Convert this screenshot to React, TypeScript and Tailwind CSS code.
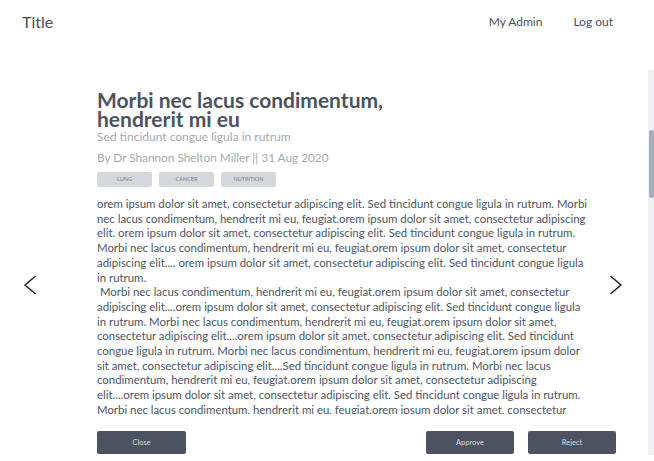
import React from "react";

const P1 =
  "orem ipsum dolor sit amet, consectetur adipiscing elit. Sed tincidunt congue ligula in rutrum. Morbi nec lacus condimentum, hendrerit mi eu, feugiat.orem ipsum dolor sit amet, consectetur adipiscing elit. orem ipsum dolor sit amet, consectetur adipiscing elit. Sed tincidunt congue ligula in rutrum. Morbi nec lacus condimentum, hendrerit mi eu, feugiat.orem ipsum dolor sit amet, consectetur adipiscing elit.... orem ipsum dolor sit amet, consectetur adipiscing elit. Sed tincidunt congue ligula in rutrum.";
const P2 =
  "\u00a0Morbi nec lacus condimentum, hendrerit mi eu, feugiat.orem ipsum dolor sit amet, consectetur adipiscing elit....orem ipsum dolor sit amet, consectetur adipiscing elit. Sed tincidunt congue ligula in rutrum. Morbi nec lacus condimentum, hendrerit mi eu, feugiat.orem ipsum dolor sit amet, consectetur adipiscing elit....orem ipsum dolor sit amet, consectetur adipiscing elit. Sed tincidunt congue ligula in rutrum. Morbi nec lacus condimentum, hendrerit mi eu, feugiat.orem ipsum dolor sit amet, consectetur adipiscing elit....Sed tincidunt congue ligula in rutrum. Morbi nec lacus condimentum, hendrerit mi eu, feugiat.orem ipsum dolor sit amet, consectetur adipiscing elit....orem ipsum dolor sit amet, consectetur adipiscing elit. Sed tincidunt congue ligula in rutrum. Morbi nec lacus condimentum, hendrerit mi eu, feugiat.orem ipsum dolor sit amet, consectetur adipiscing elit. Sed tincidunt congue ligula in rutrum.";

function Chevron({ dir }: { dir: "left" | "right" }) {
  return (
    <svg width="14" height="20" viewBox="0 0 14 20" fill="none">
      <polyline
        points={dir === "left" ? "12,1.5 2,10 12,18.5" : "2,1.5 12,10 2,18.5"}
        stroke="#1f2328"
        strokeWidth="1.6"
        strokeLinecap="round"
        strokeLinejoin="round"
      />
    </svg>
  );
}

export default function App() {
  return (
    <div
      className="w-[654px] h-[461px] bg-white overflow-hidden flex flex-col text-[#4b5563]"
      style={{ fontFamily: "Lato, 'Noto Sans', sans-serif" }}
    >
      <header className="h-[44px] shrink-0 flex items-center justify-between pl-[22px] pr-[41px]">
        <div className="text-[16px] text-[#4a4f59]">Title</div>
        <nav className="flex items-center gap-[31px] text-[12px] text-[#4a4f59]">
          <span>My Admin</span>
          <span>Log out</span>
        </nav>
      </header>

      <div className="mt-[26px] h-[385px] flex">
        <div className="relative flex-1 flex flex-col">
          <button className="absolute left-[23px] top-[205px]">
            <Chevron dir="left" />
          </button>
          <button className="absolute left-[609px] top-[205px]">
            <Chevron dir="right" />
          </button>

          <div className="ml-[97px] w-[519px] flex flex-col">
            <h1 className="mt-[20px] w-[300px] text-[21px] leading-[19px] font-bold text-[#4b5361]">
              Morbi nec lacus condimentum, hendrerit mi eu
            </h1>
            <div className="mt-[3px] text-[12px] leading-[12px] text-[#a3a9b3]">
              Sed tincidunt congue ligula in rutrum
            </div>
            <div className="mt-[9px] text-[11.8px] leading-[12px] text-[#a3a9b3]">
              By Dr Shannon Shelton Miller || 31 Aug 2020
            </div>
            <div className="mt-[8px] flex gap-[7px]">
              {["LUNG", "CANCER", "NUTRITION"].map((t) => (
                <span
                  key={t}
                  className="w-[55px] h-[15px] rounded-[2px] bg-[#d4d7dc] flex items-center justify-center text-[5.5px] text-[#7b818b]"
                >
                  {t}
                </span>
              ))}
            </div>
            <div className="mt-[10px] h-[217px] w-[493px] overflow-hidden text-[11.4px] leading-[14.7px] text-[#4b5563]">
              <p>{P1}</p>
              <p>{P2}</p>
            </div>
            <div className="mt-[17px] flex justify-between">
              <button className="w-[89px] h-[23px] rounded-[2px] bg-[#4b5361] text-[7.5px] text-[#d7dbe0]">
                Close
              </button>
              <div className="flex gap-[14px]">
                <button className="w-[88px] h-[23px] rounded-[2px] bg-[#4b5361] text-[7.5px] text-[#d7dbe0]">
                  Approve
                </button>
                <button className="w-[88px] h-[23px] rounded-[2px] bg-[#4b5361] text-[7.5px] text-[#d7dbe0]">
                  Reject
                </button>
              </div>
            </div>
          </div>
        </div>
        <div className="w-[6px] h-full bg-[#eef0f5] flex flex-col">
          <div className="mt-[60px] ml-[1px] w-[5px] h-[68px] rounded-[3px] bg-[#a3adbb]" />
        </div>
      </div>
    </div>
  );
}
